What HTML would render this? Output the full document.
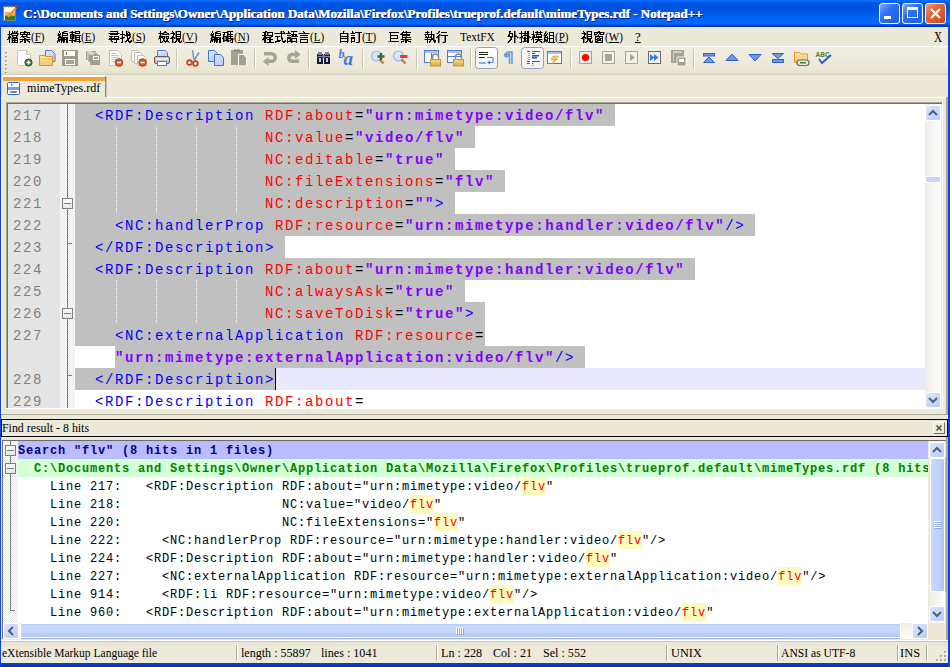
<!DOCTYPE html><html><head><meta charset="utf-8"><style>
*{margin:0;padding:0;box-sizing:border-box}
html,body{width:950px;height:667px;overflow:hidden;background:#0A4ADF}
body{position:relative;font-family:"Liberation Sans",sans-serif}
.a{position:absolute}
.serif{font-family:"Liberation Serif",serif;white-space:pre;transform-origin:0 0}
.ed{font-family:"Liberation Mono",monospace;white-space:pre;font-size:14px;letter-spacing:1.6px;line-height:22px;height:22px}
.rs{font-family:"Liberation Mono",monospace;white-space:pre;font-size:12px;letter-spacing:0.8px;line-height:18px;height:18px}
.t{color:#0000FF}.n{color:#FF0000}.q{color:#8000FF;font-weight:bold}.k{color:#000}
</style></head><body><svg width="0" height="0" style="position:absolute"><defs><pattern id="ck" width="2" height="2" patternUnits="userSpaceOnUse"><rect width="2" height="2" fill="#fff"/><rect width="1" height="1" fill="#E8E8E8"/><rect x="1" y="1" width="1" height="1" fill="#E8E8E8"/></pattern><pattern id="ig" width="1" height="2" patternUnits="userSpaceOnUse"><rect width="1" height="1" fill="#fff"/></pattern></defs></svg><div class="a" style="left:0px;top:0px;width:950px;height:27px;background:linear-gradient(#0A6AFE 0px,#0866FC 2px,#0052DE 3px,#0052E0 6px,#0054E4 10px,#0058EA 14px,#0064F8 17px,#0068FF 21px,#0066FC 24px,#0048D4 25px,#0034BC 26.5px,#0030B0 27px);"></div><div class="a serif" style="left:23px;top:6px;font-weight:bold;font-size:13px;color:#fff;line-height:16px;text-shadow:0.5px 0 0 #fff,1px 1px 0 #0A2070,1.5px 1px 0 #0A2070">C:\Documents and Settings\Owner\Application Data\Mozilla\Firefox\Profiles\trueprof.default\mimeTypes.rdf - Notepad++</div><svg class="a" style="left:3px;top:4px" width="15" height="18" viewBox="0 0 15 18">
<rect x="0.5" y="2.5" width="12" height="14" fill="#fff" stroke="#8A7E68"/>
<rect x="2" y="8" width="10" height="3" fill="#EDB457"/>
<rect x="2" y="11" width="10" height="1" fill="#B8A060"/>
<rect x="2" y="12" width="10" height="4" fill="#2A7E2A"/>
<path d="M2.5 1.5v2M5.5 1.5v2M8.5 1.5v2" stroke="#4A7AD0"/>
<path d="M5 13 L13 4" stroke="#F08A30" stroke-width="2.2"/>
<rect x="12" y="1" width="2.5" height="2.5" fill="#E02A20"/>
</svg><div class="a" style="left:879px;top:3px;width:21px;height:21px;border:1px solid #fff;border-radius:3px;background:linear-gradient(135deg,#7EAAF8 0%,#2F6FF0 40%,#1F5EE6 100%)"></div><div class="a" style="left:884px;top:16px;width:7px;height:3px;background:#fff"></div><div class="a" style="left:902px;top:3px;width:21px;height:21px;border:1px solid #fff;border-radius:3px;background:linear-gradient(135deg,#7EAAF8 0%,#2F6FF0 40%,#1F5EE6 100%)"></div><div class="a" style="left:907px;top:7px;width:11px;height:11px;border:1px solid #fff;border-top-width:3px"></div><div class="a" style="left:925px;top:3px;width:21px;height:21px;border:1px solid #fff;border-radius:3px;background:linear-gradient(135deg,#F29A78 0%,#E4683E 35%,#D0471C 100%)"></div><svg class="a" style="left:925px;top:3px" width="21" height="21"><path d="M6 6L15 15M15 6L6 15" stroke="#fff" stroke-width="2.2"/></svg><div class="a" style="left:1px;top:27px;width:947px;height:636px;background:#ECE9D8;"></div><svg class="a" style="left:7px;top:31px" width="14" height="14" shape-rendering="crispEdges"><path d="M2 0h1v1h-1zM5 0h1v1h-1zM7 0h1v1h-1zM10 0h1v1h-1zM2 1h1v1h-1zM5 1h1v1h-1zM7 1h1v1h-1zM9 1h1v1h-1zM2 2h1v1h-1zM4 2h7v1h-7zM1 3h4v1h-4zM10 3h1v1h-1zM2 4h1v1h-1zM5 4h6v1h-6zM2 5h2v1h-2zM5 5h1v1h-1zM9 5h1v1h-1zM1 6h3v1h-3zM6 6h4v1h-4zM1 7h2v1h-2zM5 7h6v1h-6zM0 8h1v1h-1zM2 8h1v1h-1zM5 8h1v1h-1zM7 8h1v1h-1zM10 8h1v1h-1zM2 9h1v1h-1zM5 9h6v1h-6zM2 10h1v1h-1zM5 10h1v1h-1zM7 10h1v1h-1zM10 10h1v1h-1zM2 11h1v1h-1zM5 11h6v1h-6z" fill="#000"/><path d="M8 0h1v1h-1zM9 0h1v1h-1zM6 1h1v1h-1zM8 1h1v1h-1zM10 1h1v1h-1zM11 2h1v1h-1zM0 3h1v1h-1zM5 3h1v1h-1zM11 3h1v1h-1zM4 4h1v1h-1zM1 5h1v1h-1zM6 5h1v1h-1zM10 5h1v1h-1zM4 6h1v1h-1zM5 6h1v1h-1zM10 6h1v1h-1zM4 7h1v1h-1zM1 8h1v1h-1zM4 8h1v1h-1zM8 8h1v1h-1zM4 9h1v1h-1zM4 10h1v1h-1zM8 10h1v1h-1zM4 11h1v1h-1z" fill="#000" fill-opacity=".45"/></svg><svg class="a" style="left:19px;top:31px" width="14" height="14" shape-rendering="crispEdges"><path d="M5 0h2v1h-2zM1 1h10v1h-10zM1 2h1v1h-1zM5 2h1v1h-1zM8 2h1v1h-1zM10 2h1v1h-1zM1 3h10v1h-10zM3 4h1v1h-1zM7 4h1v1h-1zM2 5h6v1h-6zM4 6h1v1h-1zM8 6h3v1h-3zM5 7h2v1h-2zM1 8h10v1h-10zM3 9h1v1h-1zM5 9h2v1h-2zM8 9h1v1h-1zM1 10h2v1h-2zM5 10h2v1h-2zM9 10h2v1h-2zM1 11h1v1h-1zM5 11h2v1h-2zM10 11h1v1h-1z" fill="#000"/><path d="M4 2h1v1h-1zM11 3h1v1h-1zM8 4h1v1h-1zM8 5h1v1h-1zM1 6h1v1h-1zM3 6h1v1h-1zM5 6h1v1h-1zM7 6h1v1h-1zM0 8h1v1h-1zM11 8h1v1h-1zM7 9h1v1h-1zM9 9h1v1h-1zM3 10h1v1h-1zM8 10h1v1h-1z" fill="#000" fill-opacity=".45"/></svg><div class="a serif" style="left:31px;top:30px;font-size:13px;line-height:14px;color:#000;transform:scaleX(0.85)">(<u>F</u>)</div><svg class="a" style="left:57px;top:31px" width="14" height="14" shape-rendering="crispEdges"><path d="M2 0h1v1h-1zM7 0h3v1h-3zM2 1h1v1h-1zM5 1h2v1h-2zM1 2h1v1h-1zM3 2h1v1h-1zM5 2h6v1h-6zM1 3h3v1h-3zM5 3h1v1h-1zM10 3h1v1h-1zM1 4h2v1h-2zM5 4h6v1h-6zM2 5h2v1h-2zM5 5h1v1h-1zM1 6h10v1h-10zM1 7h1v1h-1zM4 7h4v1h-4zM9 7h2v1h-2zM1 8h10v1h-10zM1 9h2v1h-2zM4 9h4v1h-4zM9 9h2v1h-2zM0 10h1v1h-1zM2 10h1v1h-1zM4 10h1v1h-1zM6 10h2v1h-2zM9 10h2v1h-2zM0 11h1v1h-1zM4 11h1v1h-1zM6 11h1v1h-1zM9 11h2v1h-2z" fill="#000"/><path d="M6 0h1v1h-1zM10 0h1v1h-1zM7 1h1v1h-1zM0 3h1v1h-1zM0 4h1v1h-1zM3 4h1v1h-1zM1 5h1v1h-1zM4 5h1v1h-1zM0 7h1v1h-1zM2 7h1v1h-1zM3 7h1v1h-1zM0 9h1v1h-1zM3 9h1v1h-1zM1 10h1v1h-1zM5 10h1v1h-1zM7 11h1v1h-1z" fill="#000" fill-opacity=".45"/></svg><svg class="a" style="left:69px;top:31px" width="14" height="14" shape-rendering="crispEdges"><path d="M3 0h1v1h-1zM6 0h5v1h-5zM1 1h6v1h-6zM10 1h1v1h-1zM3 2h1v1h-1zM6 2h5v1h-5zM1 3h4v1h-4zM1 4h1v1h-1zM3 4h9v1h-9zM1 5h4v1h-4zM6 5h1v1h-1zM10 5h1v1h-1zM1 6h1v1h-1zM3 6h2v1h-2zM6 6h5v1h-5zM1 7h4v1h-4zM6 7h1v1h-1zM10 7h1v1h-1zM3 8h1v1h-1zM6 8h5v1h-5zM0 9h7v1h-7zM10 9h1v1h-1zM3 10h1v1h-1zM5 10h7v1h-7zM3 11h1v1h-1zM10 11h1v1h-1z" fill="#000"/><path d="M2 0h1v1h-1zM0 1h1v1h-1zM2 2h1v1h-1zM5 3h1v1h-1zM2 4h1v1h-1zM5 5h1v1h-1zM7 5h1v1h-1zM2 6h1v1h-1zM5 6h1v1h-1zM5 7h1v1h-1zM7 7h1v1h-1zM2 8h1v1h-1zM7 9h1v1h-1zM2 10h1v1h-1zM2 11h1v1h-1z" fill="#000" fill-opacity=".45"/></svg><div class="a serif" style="left:81px;top:30px;font-size:13px;line-height:14px;color:#000;transform:scaleX(0.85)">(<u>E</u>)</div><svg class="a" style="left:108px;top:31px" width="14" height="14" shape-rendering="crispEdges"><path d="M2 0h8v1h-8zM9 1h1v1h-1zM1 2h10v1h-10zM2 3h8v1h-8zM1 5h4v1h-4zM6 5h5v1h-5zM3 6h1v1h-1zM6 6h1v1h-1zM10 6h1v1h-1zM1 7h10v1h-10zM1 8h10v1h-10zM3 9h1v1h-1zM8 9h1v1h-1zM3 10h2v1h-2zM8 10h1v1h-1zM6 11h3v1h-3z" fill="#000"/><path d="M0 2h1v1h-1zM11 2h1v1h-1zM5 5h1v1h-1zM2 6h1v1h-1zM0 8h1v1h-1zM11 8h1v1h-1zM2 9h1v1h-1zM4 11h1v1h-1z" fill="#000" fill-opacity=".45"/></svg><svg class="a" style="left:120px;top:31px" width="14" height="14" shape-rendering="crispEdges"><path d="M2 0h1v1h-1zM6 0h1v1h-1zM2 1h1v1h-1zM6 1h1v1h-1zM8 1h2v1h-2zM2 2h1v1h-1zM6 2h2v1h-2zM9 2h1v1h-1zM0 3h5v1h-5zM6 3h5v1h-5zM2 4h1v1h-1zM5 4h5v1h-5zM2 5h1v1h-1zM7 5h1v1h-1zM10 5h1v1h-1zM2 6h3v1h-3zM7 6h1v1h-1zM9 6h1v1h-1zM0 7h3v1h-3zM7 7h3v1h-3zM2 8h1v1h-1zM7 8h2v1h-2zM2 9h1v1h-1zM6 9h3v1h-3zM11 9h1v1h-1zM2 10h1v1h-1zM5 10h2v1h-2zM8 10h4v1h-4zM1 11h2v1h-2zM9 11h2v1h-2z" fill="#000"/><path d="M7 0h1v1h-1zM8 0h1v1h-1zM7 1h1v1h-1zM10 2h1v1h-1zM4 4h1v1h-1zM10 4h1v1h-1zM6 5h1v1h-1zM9 5h1v1h-1zM1 6h1v1h-1zM10 6h1v1h-1zM3 7h1v1h-1zM10 9h1v1h-1zM4 10h1v1h-1zM5 11h1v1h-1z" fill="#000" fill-opacity=".45"/></svg><div class="a serif" style="left:132px;top:30px;font-size:13px;line-height:14px;color:#000;transform:scaleX(0.85)">(<u>S</u>)</div><svg class="a" style="left:158px;top:31px" width="14" height="14" shape-rendering="crispEdges"><path d="M2 0h1v1h-1zM7 0h1v1h-1zM2 1h1v1h-1zM6 1h3v1h-3zM1 2h5v1h-5zM9 2h2v1h-2zM2 3h1v1h-1zM4 3h5v1h-5zM10 3h1v1h-1zM2 4h1v1h-1zM1 5h6v1h-6zM8 5h3v1h-3zM1 6h4v1h-4zM6 6h1v1h-1zM8 6h1v1h-1zM10 6h1v1h-1zM1 7h2v1h-2zM5 7h2v1h-2zM8 7h3v1h-3zM2 8h1v1h-1zM5 8h1v1h-1zM9 8h1v1h-1zM2 9h1v1h-1zM5 9h2v1h-2zM8 9h2v1h-2zM2 10h1v1h-1zM4 10h1v1h-1zM6 10h5v1h-5zM2 11h2v1h-2zM7 11h1v1h-1z" fill="#000"/><path d="M6 0h1v1h-1zM5 1h1v1h-1zM0 2h1v1h-1zM6 2h1v1h-1zM8 2h1v1h-1zM9 3h1v1h-1zM11 3h1v1h-1zM1 4h1v1h-1zM3 4h1v1h-1zM7 5h1v1h-1zM5 6h1v1h-1zM7 6h1v1h-1zM0 7h1v1h-1zM4 7h1v1h-1zM0 8h1v1h-1zM6 8h1v1h-1zM8 8h1v1h-1zM5 10h1v1h-1zM4 11h1v1h-1zM10 11h1v1h-1zM11 11h1v1h-1z" fill="#000" fill-opacity=".45"/></svg><svg class="a" style="left:170px;top:31px" width="14" height="14" shape-rendering="crispEdges"><path d="M2 0h1v1h-1zM6 0h5v1h-5zM3 1h1v1h-1zM6 1h1v1h-1zM10 1h1v1h-1zM1 2h4v1h-4zM6 2h1v1h-1zM10 2h1v1h-1zM3 3h2v1h-2zM6 3h5v1h-5zM3 4h1v1h-1zM6 4h1v1h-1zM10 4h1v1h-1zM2 5h2v1h-2zM6 5h5v1h-5zM1 6h4v1h-4zM6 6h1v1h-1zM10 6h1v1h-1zM0 7h3v1h-3zM4 7h1v1h-1zM6 7h5v1h-5zM2 8h1v1h-1zM6 8h4v1h-4zM2 9h1v1h-1zM6 9h1v1h-1zM8 9h2v1h-2zM2 10h1v1h-1zM5 10h2v1h-2zM8 10h2v1h-2zM11 10h1v1h-1zM2 11h1v1h-1zM4 11h2v1h-2zM9 11h2v1h-2z" fill="#000"/><path d="M5 0h1v1h-1zM2 1h1v1h-1zM5 1h1v1h-1zM0 2h1v1h-1zM5 2h1v1h-1zM5 3h1v1h-1zM5 4h1v1h-1zM5 5h1v1h-1zM5 6h1v1h-1zM3 7h1v1h-1zM5 7h1v1h-1zM3 8h1v1h-1zM3 9h1v1h-1zM7 9h1v1h-1zM11 9h1v1h-1zM3 10h1v1h-1zM10 10h1v1h-1zM3 11h1v1h-1zM11 11h1v1h-1z" fill="#000" fill-opacity=".45"/></svg><div class="a serif" style="left:182px;top:30px;font-size:13px;line-height:14px;color:#000;transform:scaleX(0.85)">(<u>V</u>)</div><svg class="a" style="left:210px;top:31px" width="14" height="14" shape-rendering="crispEdges"><path d="M2 0h1v1h-1zM7 0h3v1h-3zM2 1h1v1h-1zM5 1h2v1h-2zM1 2h1v1h-1zM3 2h1v1h-1zM5 2h6v1h-6zM1 3h3v1h-3zM5 3h1v1h-1zM10 3h1v1h-1zM1 4h2v1h-2zM5 4h6v1h-6zM2 5h2v1h-2zM5 5h1v1h-1zM1 6h10v1h-10zM1 7h1v1h-1zM4 7h4v1h-4zM9 7h2v1h-2zM1 8h10v1h-10zM1 9h2v1h-2zM4 9h4v1h-4zM9 9h2v1h-2zM0 10h1v1h-1zM2 10h1v1h-1zM4 10h1v1h-1zM6 10h2v1h-2zM9 10h2v1h-2zM0 11h1v1h-1zM4 11h1v1h-1zM6 11h1v1h-1zM9 11h2v1h-2z" fill="#000"/><path d="M6 0h1v1h-1zM10 0h1v1h-1zM7 1h1v1h-1zM0 3h1v1h-1zM0 4h1v1h-1zM3 4h1v1h-1zM1 5h1v1h-1zM4 5h1v1h-1zM0 7h1v1h-1zM2 7h1v1h-1zM3 7h1v1h-1zM0 9h1v1h-1zM3 9h1v1h-1zM1 10h1v1h-1zM5 10h1v1h-1zM7 11h1v1h-1z" fill="#000" fill-opacity=".45"/></svg><svg class="a" style="left:222px;top:31px" width="14" height="14" shape-rendering="crispEdges"><path d="M5 0h6v1h-6zM1 1h5v1h-5zM8 1h1v1h-1zM2 2h1v1h-1zM5 2h1v1h-1zM8 2h1v1h-1zM1 3h2v1h-2zM5 3h6v1h-6zM1 4h1v1h-1zM5 4h1v1h-1zM8 4h1v1h-1zM1 5h10v1h-10zM1 6h1v1h-1zM4 6h2v1h-2zM8 6h1v1h-1zM0 7h2v1h-2zM4 7h7v1h-7zM1 8h1v1h-1zM4 8h2v1h-2zM9 8h2v1h-2zM1 9h6v1h-6zM8 9h1v1h-1zM10 9h1v1h-1zM1 10h1v1h-1zM5 10h2v1h-2zM10 10h1v1h-1zM9 11h2v1h-2z" fill="#000"/><path d="M0 1h1v1h-1zM6 1h1v1h-1zM6 2h1v1h-1zM2 4h1v1h-1zM6 4h1v1h-1zM0 6h1v1h-1zM2 6h1v1h-1zM3 6h1v1h-1zM6 6h1v1h-1zM2 7h1v1h-1zM3 7h1v1h-1zM11 7h1v1h-1zM2 8h1v1h-1zM3 8h1v1h-1zM6 8h1v1h-1zM8 8h1v1h-1zM11 8h1v1h-1zM7 9h1v1h-1zM9 9h1v1h-1zM2 10h1v1h-1zM4 10h1v1h-1zM7 10h1v1h-1zM8 10h1v1h-1zM8 11h1v1h-1z" fill="#000" fill-opacity=".45"/></svg><div class="a serif" style="left:234px;top:30px;font-size:13px;line-height:14px;color:#000;transform:scaleX(0.85)">(<u>N</u>)</div><svg class="a" style="left:262px;top:31px" width="14" height="14" shape-rendering="crispEdges"><path d="M3 0h2v1h-2zM1 1h3v1h-3zM5 1h6v1h-6zM2 2h2v1h-2zM5 2h1v1h-1zM10 2h1v1h-1zM2 3h2v1h-2zM5 3h1v1h-1zM10 3h1v1h-1zM0 4h11v1h-11zM2 5h2v1h-2zM9 5h2v1h-2zM2 6h7v1h-7zM1 7h4v1h-4zM7 7h2v1h-2zM0 8h4v1h-4zM5 8h6v1h-6zM2 9h2v1h-2zM7 9h2v1h-2zM2 10h2v1h-2zM7 10h2v1h-2zM2 11h2v1h-2zM5 11h7v1h-7z" fill="#000"/><path d="M0 1h1v1h-1zM4 1h1v1h-1zM6 2h1v1h-1zM6 3h1v1h-1zM7 5h1v1h-1zM8 5h1v1h-1zM1 6h1v1h-1zM9 6h1v1h-1zM0 9h1v1h-1zM4 11h1v1h-1z" fill="#000" fill-opacity=".45"/></svg><svg class="a" style="left:274px;top:31px" width="14" height="14" shape-rendering="crispEdges"><path d="M7 0h1v1h-1zM9 0h1v1h-1zM7 1h1v1h-1zM10 1h1v1h-1zM1 2h10v1h-10zM7 3h1v1h-1zM7 4h1v1h-1zM1 5h5v1h-5zM7 5h1v1h-1zM3 6h1v1h-1zM7 6h1v1h-1zM3 7h1v1h-1zM7 7h2v1h-2zM3 8h1v1h-1zM8 8h1v1h-1zM3 9h4v1h-4zM8 9h1v1h-1zM11 9h1v1h-1zM1 10h5v1h-5zM8 10h4v1h-4zM1 11h1v1h-1zM9 11h2v1h-2z" fill="#000"/><path d="M6 0h1v1h-1zM8 0h1v1h-1zM6 1h1v1h-1zM9 1h1v1h-1zM0 2h1v1h-1zM11 2h1v1h-1zM6 5h1v1h-1zM8 6h1v1h-1zM7 8h1v1h-1zM10 9h1v1h-1zM2 11h1v1h-1z" fill="#000" fill-opacity=".45"/></svg><svg class="a" style="left:286px;top:31px" width="14" height="14" shape-rendering="crispEdges"><path d="M2 0h1v1h-1zM5 0h6v1h-6zM2 1h1v1h-1zM7 1h1v1h-1zM0 2h5v1h-5zM7 2h1v1h-1zM5 3h6v1h-6zM1 4h4v1h-4zM6 4h2v1h-2zM9 4h2v1h-2zM5 5h7v1h-7zM1 6h4v1h-4zM1 7h10v1h-10zM1 8h1v1h-1zM4 8h2v1h-2zM10 8h1v1h-1zM1 9h1v1h-1zM4 9h2v1h-2zM10 9h1v1h-1zM1 10h10v1h-10zM1 11h1v1h-1zM5 11h1v1h-1zM10 11h1v1h-1z" fill="#000"/><path d="M11 0h1v1h-1zM3 1h1v1h-1zM3 8h1v1h-1zM6 8h1v1h-1zM3 9h1v1h-1zM6 9h1v1h-1zM6 11h1v1h-1z" fill="#000" fill-opacity=".45"/></svg><svg class="a" style="left:298px;top:31px" width="14" height="14" shape-rendering="crispEdges"><path d="M5 0h1v1h-1zM6 1h1v1h-1zM1 2h10v1h-10zM2 4h8v1h-8zM2 6h8v1h-8zM2 8h8v1h-8zM2 9h1v1h-1zM9 9h1v1h-1zM2 10h1v1h-1zM9 10h1v1h-1zM2 11h8v1h-8z" fill="#000"/><path d="M5 1h1v1h-1zM0 2h1v1h-1zM11 2h1v1h-1z" fill="#000" fill-opacity=".45"/></svg><div class="a serif" style="left:310px;top:30px;font-size:13px;line-height:14px;color:#000;transform:scaleX(0.85)">(<u>L</u>)</div><svg class="a" style="left:338px;top:31px" width="14" height="14" shape-rendering="crispEdges"><path d="M5 0h1v1h-1zM5 1h1v1h-1zM2 2h8v1h-8zM2 3h1v1h-1zM9 3h1v1h-1zM2 4h1v1h-1zM9 4h1v1h-1zM2 5h8v1h-8zM2 6h1v1h-1zM9 6h1v1h-1zM2 7h8v1h-8zM2 8h1v1h-1zM9 8h1v1h-1zM2 9h1v1h-1zM9 9h1v1h-1zM2 10h8v1h-8zM2 11h1v1h-1zM9 11h1v1h-1z" fill="#000"/><path d="M6 0h1v1h-1zM10 2h1v1h-1zM10 3h1v1h-1zM10 4h1v1h-1zM10 5h1v1h-1zM10 6h1v1h-1zM10 7h1v1h-1zM10 8h1v1h-1zM10 9h1v1h-1zM10 10h1v1h-1z" fill="#000" fill-opacity=".45"/></svg><svg class="a" style="left:350px;top:31px" width="14" height="14" shape-rendering="crispEdges"><path d="M2 0h1v1h-1zM2 1h1v1h-1zM5 1h7v1h-7zM1 2h4v1h-4zM9 2h1v1h-1zM9 3h1v1h-1zM1 4h4v1h-4zM9 4h1v1h-1zM9 5h1v1h-1zM1 6h4v1h-4zM9 6h1v1h-1zM1 7h4v1h-4zM9 7h1v1h-1zM1 8h1v1h-1zM4 8h1v1h-1zM9 8h1v1h-1zM1 9h1v1h-1zM4 9h1v1h-1zM9 9h1v1h-1zM1 10h4v1h-4zM9 10h1v1h-1zM1 11h1v1h-1zM6 11h3v1h-3z" fill="#000"/><path d="M3 1h1v1h-1zM0 2h1v1h-1zM8 2h1v1h-1zM8 3h1v1h-1zM8 4h1v1h-1zM8 5h1v1h-1zM8 6h1v1h-1zM8 7h1v1h-1zM8 8h1v1h-1zM8 9h1v1h-1zM8 10h1v1h-1zM9 11h1v1h-1z" fill="#000" fill-opacity=".45"/></svg><div class="a serif" style="left:362px;top:30px;font-size:13px;line-height:14px;color:#000;transform:scaleX(0.85)">(<u>T</u>)</div><svg class="a" style="left:388px;top:31px" width="14" height="14" shape-rendering="crispEdges"><path d="M1 1h10v1h-10zM2 2h1v1h-1zM2 3h1v1h-1zM2 4h8v1h-8zM2 5h1v1h-1zM9 5h1v1h-1zM2 6h1v1h-1zM9 6h1v1h-1zM2 7h8v1h-8zM2 8h1v1h-1zM2 9h1v1h-1zM1 10h10v1h-10z" fill="#000"/><path d="M0 10h1v1h-1z" fill="#000" fill-opacity=".45"/></svg><svg class="a" style="left:400px;top:31px" width="14" height="14" shape-rendering="crispEdges"><path d="M3 0h1v1h-1zM6 0h1v1h-1zM2 1h9v1h-9zM1 2h2v1h-2zM6 2h1v1h-1zM0 3h10v1h-10zM2 4h8v1h-8zM2 5h1v1h-1zM6 5h1v1h-1zM2 6h9v1h-9zM2 7h1v1h-1zM5 7h1v1h-1zM1 8h10v1h-10zM5 9h3v1h-3zM1 10h3v1h-3zM5 10h2v1h-2zM8 10h3v1h-3zM1 11h1v1h-1zM5 11h2v1h-2z" fill="#000"/><path d="M5 0h1v1h-1zM6 7h1v1h-1zM0 8h1v1h-1zM11 8h1v1h-1zM3 9h1v1h-1zM4 9h1v1h-1zM8 9h1v1h-1zM10 11h1v1h-1z" fill="#000" fill-opacity=".45"/></svg><svg class="a" style="left:424px;top:31px" width="14" height="14" shape-rendering="crispEdges"><path d="M3 0h1v1h-1zM7 0h1v1h-1zM1 1h4v1h-4zM7 1h1v1h-1zM3 2h1v1h-1zM7 2h1v1h-1zM1 3h9v1h-9zM1 4h1v1h-1zM4 4h1v1h-1zM7 4h1v1h-1zM9 4h1v1h-1zM2 5h1v1h-1zM4 5h1v1h-1zM7 5h1v1h-1zM9 5h1v1h-1zM1 6h7v1h-7zM9 6h1v1h-1zM3 7h1v1h-1zM7 7h3v1h-3zM1 8h9v1h-9zM3 9h1v1h-1zM6 9h1v1h-1zM9 9h3v1h-3zM3 10h1v1h-1zM5 10h2v1h-2zM10 10h2v1h-2zM3 11h1v1h-1zM5 11h1v1h-1zM10 11h1v1h-1z" fill="#000"/><path d="M5 1h1v1h-1zM0 3h1v1h-1zM10 3h1v1h-1zM10 4h1v1h-1zM1 5h1v1h-1zM6 5h1v1h-1zM10 5h1v1h-1zM10 6h1v1h-1zM10 7h1v1h-1zM0 8h1v1h-1zM10 8h1v1h-1zM7 9h1v1h-1zM9 10h1v1h-1zM11 11h1v1h-1z" fill="#000" fill-opacity=".45"/></svg><svg class="a" style="left:436px;top:31px" width="14" height="14" shape-rendering="crispEdges"><path d="M3 0h1v1h-1zM2 1h1v1h-1zM5 1h6v1h-6zM1 2h1v1h-1zM3 3h1v1h-1zM2 4h2v1h-2zM5 4h7v1h-7zM1 5h2v1h-2zM9 5h1v1h-1zM0 6h3v1h-3zM9 6h1v1h-1zM2 7h1v1h-1zM9 7h1v1h-1zM2 8h1v1h-1zM9 8h1v1h-1zM2 9h1v1h-1zM9 9h1v1h-1zM2 10h1v1h-1zM9 10h1v1h-1zM2 11h1v1h-1zM7 11h2v1h-2z" fill="#000"/><path d="M2 0h1v1h-1zM3 1h1v1h-1zM0 2h1v1h-1zM2 2h1v1h-1zM4 3h1v1h-1zM4 4h1v1h-1zM3 5h1v1h-1zM8 5h1v1h-1zM3 6h1v1h-1zM8 6h1v1h-1zM3 7h1v1h-1zM8 7h1v1h-1zM3 8h1v1h-1zM8 8h1v1h-1zM3 9h1v1h-1zM8 9h1v1h-1zM3 10h1v1h-1zM8 10h1v1h-1zM3 11h1v1h-1zM6 11h1v1h-1zM9 11h1v1h-1z" fill="#000" fill-opacity=".45"/></svg><svg class="a" style="left:507px;top:31px" width="14" height="14" shape-rendering="crispEdges"><path d="M2 0h2v1h-2zM7 0h1v1h-1zM2 1h1v1h-1zM7 1h1v1h-1zM2 2h4v1h-4zM7 2h1v1h-1zM2 3h1v1h-1zM5 3h1v1h-1zM7 3h1v1h-1zM1 4h2v1h-2zM5 4h1v1h-1zM7 4h2v1h-2zM1 5h5v1h-5zM7 5h3v1h-3zM3 6h2v1h-2zM7 6h1v1h-1zM10 6h1v1h-1zM4 7h1v1h-1zM7 7h1v1h-1zM3 8h2v1h-2zM7 8h1v1h-1zM2 9h2v1h-2zM7 9h1v1h-1zM1 10h2v1h-2zM7 10h1v1h-1zM1 11h1v1h-1zM7 11h1v1h-1z" fill="#000"/><path d="M8 0h1v1h-1zM3 1h1v1h-1zM8 1h1v1h-1zM8 2h1v1h-1zM1 3h1v1h-1zM8 3h1v1h-1zM9 4h1v1h-1zM0 5h1v1h-1zM10 5h1v1h-1zM5 6h1v1h-1zM8 6h1v1h-1zM11 6h1v1h-1zM3 7h1v1h-1zM8 7h1v1h-1zM10 7h1v1h-1zM8 8h1v1h-1zM8 9h1v1h-1zM8 10h1v1h-1zM0 11h1v1h-1zM8 11h1v1h-1z" fill="#000" fill-opacity=".45"/></svg><svg class="a" style="left:519px;top:31px" width="14" height="14" shape-rendering="crispEdges"><path d="M2 0h1v1h-1zM6 0h1v1h-1zM8 0h2v1h-2zM2 1h1v1h-1zM6 1h1v1h-1zM8 1h2v1h-2zM0 2h10v1h-10zM2 3h1v1h-1zM6 3h1v1h-1zM8 3h2v1h-2zM2 4h1v1h-1zM4 4h6v1h-6zM2 5h2v1h-2zM8 5h3v1h-3zM1 6h3v1h-3zM5 6h2v1h-2zM8 6h2v1h-2zM11 6h1v1h-1zM2 7h1v1h-1zM4 7h6v1h-6zM2 8h1v1h-1zM5 8h2v1h-2zM8 8h2v1h-2zM2 9h1v1h-1zM5 9h2v1h-2zM8 9h2v1h-2zM2 10h1v1h-1zM4 10h6v1h-6zM1 11h2v1h-2zM8 11h2v1h-2z" fill="#000"/><path d="M5 0h1v1h-1zM5 1h1v1h-1zM5 3h1v1h-1zM5 5h1v1h-1zM6 5h1v1h-1zM0 6h1v1h-1zM10 6h1v1h-1zM0 7h1v1h-1zM1 7h1v1h-1zM7 9h1v1h-1zM3 10h1v1h-1zM0 11h1v1h-1zM4 11h1v1h-1z" fill="#000" fill-opacity=".45"/></svg><svg class="a" style="left:531px;top:31px" width="14" height="14" shape-rendering="crispEdges"><path d="M2 0h1v1h-1zM6 0h1v1h-1zM9 0h1v1h-1zM2 1h1v1h-1zM4 1h7v1h-7zM2 2h1v1h-1zM6 2h1v1h-1zM9 2h1v1h-1zM1 3h2v1h-2zM5 3h6v1h-6zM2 4h2v1h-2zM5 4h1v1h-1zM10 4h1v1h-1zM2 5h2v1h-2zM5 5h6v1h-6zM1 6h10v1h-10zM1 7h2v1h-2zM7 7h1v1h-1zM0 8h1v1h-1zM2 8h1v1h-1zM4 8h7v1h-7zM2 9h1v1h-1zM6 9h3v1h-3zM2 10h1v1h-1zM5 10h2v1h-2zM9 10h2v1h-2zM2 11h1v1h-1zM4 11h2v1h-2zM10 11h1v1h-1z" fill="#000"/><path d="M5 0h1v1h-1zM11 1h1v1h-1zM5 2h1v1h-1zM0 3h1v1h-1zM3 3h1v1h-1zM4 3h1v1h-1zM1 5h1v1h-1zM1 8h1v1h-1zM11 8h1v1h-1zM9 9h1v1h-1zM8 10h1v1h-1zM11 11h1v1h-1z" fill="#000" fill-opacity=".45"/></svg><svg class="a" style="left:543px;top:31px" width="14" height="14" shape-rendering="crispEdges"><path d="M2 1h1v1h-1zM6 1h5v1h-5zM2 2h1v1h-1zM4 2h1v1h-1zM6 2h1v1h-1zM10 2h1v1h-1zM1 3h1v1h-1zM3 3h1v1h-1zM6 3h1v1h-1zM10 3h1v1h-1zM1 4h3v1h-3zM6 4h5v1h-5zM2 5h1v1h-1zM4 5h1v1h-1zM6 5h1v1h-1zM10 5h1v1h-1zM1 6h4v1h-4zM6 6h1v1h-1zM10 6h1v1h-1zM1 7h1v1h-1zM4 7h1v1h-1zM6 7h5v1h-5zM1 8h2v1h-2zM4 8h1v1h-1zM6 8h1v1h-1zM10 8h1v1h-1zM1 9h4v1h-4zM6 9h1v1h-1zM10 9h1v1h-1zM1 10h1v1h-1zM3 10h2v1h-2zM6 10h1v1h-1zM10 10h1v1h-1zM5 11h7v1h-7z" fill="#000"/><path d="M2 0h1v1h-1zM3 0h1v1h-1zM3 1h1v1h-1zM1 2h1v1h-1zM2 3h1v1h-1zM4 3h1v1h-1zM0 4h1v1h-1zM1 5h1v1h-1zM2 7h1v1h-1zM5 7h1v1h-1zM3 8h1v1h-1zM0 10h1v1h-1zM2 10h1v1h-1zM0 11h1v1h-1zM1 11h1v1h-1zM3 11h1v1h-1z" fill="#000" fill-opacity=".45"/></svg><div class="a serif" style="left:555px;top:30px;font-size:13px;line-height:14px;color:#000;transform:scaleX(0.85)">(<u>P</u>)</div><svg class="a" style="left:581px;top:31px" width="14" height="14" shape-rendering="crispEdges"><path d="M2 0h1v1h-1zM6 0h5v1h-5zM3 1h1v1h-1zM6 1h1v1h-1zM10 1h1v1h-1zM1 2h4v1h-4zM6 2h1v1h-1zM10 2h1v1h-1zM3 3h2v1h-2zM6 3h5v1h-5zM3 4h1v1h-1zM6 4h1v1h-1zM10 4h1v1h-1zM2 5h2v1h-2zM6 5h5v1h-5zM1 6h4v1h-4zM6 6h1v1h-1zM10 6h1v1h-1zM0 7h3v1h-3zM4 7h1v1h-1zM6 7h5v1h-5zM2 8h1v1h-1zM6 8h4v1h-4zM2 9h1v1h-1zM6 9h1v1h-1zM8 9h2v1h-2zM2 10h1v1h-1zM5 10h2v1h-2zM8 10h2v1h-2zM11 10h1v1h-1zM2 11h1v1h-1zM4 11h2v1h-2zM9 11h2v1h-2z" fill="#000"/><path d="M5 0h1v1h-1zM2 1h1v1h-1zM5 1h1v1h-1zM0 2h1v1h-1zM5 2h1v1h-1zM5 3h1v1h-1zM5 4h1v1h-1zM5 5h1v1h-1zM5 6h1v1h-1zM3 7h1v1h-1zM5 7h1v1h-1zM3 8h1v1h-1zM3 9h1v1h-1zM7 9h1v1h-1zM11 9h1v1h-1zM3 10h1v1h-1zM10 10h1v1h-1zM3 11h1v1h-1zM11 11h1v1h-1z" fill="#000" fill-opacity=".45"/></svg><svg class="a" style="left:593px;top:31px" width="14" height="14" shape-rendering="crispEdges"><path d="M5 0h2v1h-2zM1 1h10v1h-10zM1 2h1v1h-1zM4 2h1v1h-1zM6 2h2v1h-2zM10 2h1v1h-1zM1 3h3v1h-3zM7 3h4v1h-4zM5 4h1v1h-1zM2 5h8v1h-8zM2 6h1v1h-1zM6 6h1v1h-1zM9 6h1v1h-1zM2 7h1v1h-1zM4 7h2v1h-2zM7 7h3v1h-3zM2 8h3v1h-3zM6 8h2v1h-2zM9 8h1v1h-1zM2 9h1v1h-1zM4 9h4v1h-4zM9 9h1v1h-1zM2 10h3v1h-3zM9 10h1v1h-1zM2 11h8v1h-8z" fill="#000"/><path d="M11 1h1v1h-1zM3 2h1v1h-1zM11 2h1v1h-1zM5 3h1v1h-1zM6 3h1v1h-1zM1 4h1v1h-1zM2 4h1v1h-1zM4 4h1v1h-1zM3 6h1v1h-1zM4 6h1v1h-1zM6 7h1v1h-1zM5 8h1v1h-1zM8 9h1v1h-1zM8 10h1v1h-1z" fill="#000" fill-opacity=".45"/></svg><div class="a serif" style="left:605px;top:30px;font-size:13px;line-height:14px;color:#000;transform:scaleX(0.85)">(<u>W</u>)</div><div class="a serif" style="left:460px;top:30px;font-size:13px;line-height:14px;color:#000;transform:scaleX(0.88)">TextFX</div><div class="a serif" style="left:635px;top:30px;font-size:13px;line-height:14px;color:#000"><u>?</u></div><div class="a serif" style="left:934px;top:30px;font-size:14px;line-height:15px;color:#000;transform:scaleX(0.8)">X</div><div class="a" style="left:1px;top:46px;width:947px;height:1px;background:#fff;"></div><div class="a" style="left:1px;top:47px;width:947px;height:27px;background:linear-gradient(#F0EEE2,#EEEBDC 50%,#E9E5D2 88%,#E0DCC8);"></div><div class="a" style="left:1px;top:74px;width:947px;height:1px;background:#D6D2BF;"></div><div class="a" style="left:3px;top:75px;width:102px;height:2px;background:#fff;"></div><div class="a" style="left:5px;top:52px;width:2px;height:2px;background:#A59E88;"></div><div class="a" style="left:6px;top:53px;width:1px;height:1px;background:#fff;"></div><div class="a" style="left:5px;top:56px;width:2px;height:2px;background:#A59E88;"></div><div class="a" style="left:6px;top:57px;width:1px;height:1px;background:#fff;"></div><div class="a" style="left:5px;top:60px;width:2px;height:2px;background:#A59E88;"></div><div class="a" style="left:6px;top:61px;width:1px;height:1px;background:#fff;"></div><div class="a" style="left:5px;top:64px;width:2px;height:2px;background:#A59E88;"></div><div class="a" style="left:6px;top:65px;width:1px;height:1px;background:#fff;"></div><div class="a" style="left:5px;top:68px;width:2px;height:2px;background:#A59E88;"></div><div class="a" style="left:6px;top:69px;width:1px;height:1px;background:#fff;"></div><div class="a" style="left:5px;top:72px;width:2px;height:2px;background:#A59E88;"></div><div class="a" style="left:6px;top:73px;width:1px;height:1px;background:#fff;"></div><div class="a" style="left:176px;top:49px;width:1px;height:20px;background:#C8C4B2;"></div><div class="a" style="left:177px;top:49px;width:1px;height:20px;background:#fff;"></div><div class="a" style="left:254px;top:49px;width:1px;height:20px;background:#C8C4B2;"></div><div class="a" style="left:255px;top:49px;width:1px;height:20px;background:#fff;"></div><div class="a" style="left:308px;top:49px;width:1px;height:20px;background:#C8C4B2;"></div><div class="a" style="left:309px;top:49px;width:1px;height:20px;background:#fff;"></div><div class="a" style="left:362px;top:49px;width:1px;height:20px;background:#C8C4B2;"></div><div class="a" style="left:363px;top:49px;width:1px;height:20px;background:#fff;"></div><div class="a" style="left:416px;top:49px;width:1px;height:20px;background:#C8C4B2;"></div><div class="a" style="left:417px;top:49px;width:1px;height:20px;background:#fff;"></div><div class="a" style="left:470px;top:49px;width:1px;height:20px;background:#C8C4B2;"></div><div class="a" style="left:471px;top:49px;width:1px;height:20px;background:#fff;"></div><div class="a" style="left:570px;top:49px;width:1px;height:20px;background:#C8C4B2;"></div><div class="a" style="left:571px;top:49px;width:1px;height:20px;background:#fff;"></div><div class="a" style="left:693px;top:49px;width:1px;height:20px;background:#C8C4B2;"></div><div class="a" style="left:694px;top:49px;width:1px;height:20px;background:#fff;"></div>
<svg class="a" style="left:0;top:0" width="950" height="80" viewBox="0 0 950 80">
<defs>
<linearGradient id="gblue" x1="0" y1="0" x2="0" y2="1"><stop offset="0" stop-color="#86A8EE"/><stop offset="1" stop-color="#4C7EE0"/></linearGradient>
<linearGradient id="gpage" x1="0" y1="0" x2="1" y2="1"><stop offset="0" stop-color="#DDE8FC"/><stop offset="1" stop-color="#B2CBF6"/></linearGradient>
<linearGradient id="gfold" x1="0" y1="0" x2="0" y2="1"><stop offset="0" stop-color="#FBE7B0"/><stop offset="1" stop-color="#F2C862"/></linearGradient>
<linearGradient id="glock" x1="0" y1="0" x2="0" y2="1"><stop offset="0" stop-color="#F6DC8C"/><stop offset="1" stop-color="#E0A840"/></linearGradient>
<linearGradient id="gbtn" x1="0" y1="0" x2="0" y2="1"><stop offset="0" stop-color="#FFFFFF"/><stop offset="1" stop-color="#F2F1EA"/></linearGradient>
</defs>
<!-- new -->
<path d="M17.5 50.5h9l4 4v11h-13z" fill="#fff" stroke="#C9C6B9"/>
<path d="M26.5 50.5v4h4" fill="#EDEBE2" stroke="#C9C6B9"/>
<circle cx="28.5" cy="62.5" r="3.6" fill="#3C7A3C" stroke="#285A28"/>
<path d="M28.5 60.5v4M26.5 62.5h4" stroke="#fff" stroke-width="1.4"/>
<!-- open -->
<path d="M45.5 50.5h6l3.5 3.5v7.5h-9.5z" fill="url(#gpage)" stroke="#4A7EDB"/>
<path d="M39.5 55.5h5l1 1h7v9h-13z" fill="url(#gfold)" stroke="#F08A22"/>
<path d="M40 59h12" stroke="#F3C060"/>
<!-- save -->
<rect x="62" y="50" width="16" height="16" fill="#9E9A88"/>
<rect x="64" y="51" width="11" height="5" fill="#fff"/>
<rect x="66" y="52" width="1" height="3" fill="#6E6A5C"/>
<rect x="65" y="59" width="10" height="6" fill="#fff"/>
<rect x="66" y="60" width="8" height="4" fill="#A8A494"/>
<!-- save all -->
<rect x="86" y="51" width="10" height="9" fill="#A6A292"/>
<rect x="88" y="53" width="10" height="9" fill="#9E9A88" stroke="#fff" stroke-width="0.6"/>
<rect x="90" y="55" width="10" height="10" fill="#A39F8E"/>
<rect x="87" y="51.5" width="5" height="1" fill="#fff"/>
<rect x="89" y="53.5" width="5" height="1" fill="#fff"/>
<rect x="93" y="56" width="6" height="4" fill="#fff"/>
<rect x="94" y="57" width="4" height="2" fill="#9E9A88"/>
<!-- close -->
<path d="M109.5 50.5h8l4 4v11h-12z" fill="#fff" stroke="#C2BFB2"/>
<path d="M111.5 53.5h5M111.5 55.5h7M111.5 57.5h7M111.5 59.5h6M111.5 61.5h4" stroke="#B4B1A3" stroke-width="0.8"/>
<circle cx="119" cy="62.5" r="3.8" fill="#E05A24" stroke="#B83A10"/>
<path d="M117 62.5h4" stroke="#fff" stroke-width="1.4"/>
<!-- close all -->
<path d="M131.5 50.5h6l2 2v9h-8z" fill="#fff" stroke="#C2BFB2"/>
<path d="M134.5 52.5h6l2 2v9h-8z" fill="#fff" stroke="#C2BFB2"/>
<path d="M137.5 55.5h6l3 3v7h-9z" fill="#fff" stroke="#C2BFB2"/>
<circle cx="142.5" cy="62.5" r="3.8" fill="#E05A24" stroke="#B83A10"/>
<path d="M140.5 62.5h4" stroke="#fff" stroke-width="1.4"/>
<!-- print -->
<path d="M157.5 50.5h8l2 2v5h-10z" fill="url(#gpage)" stroke="#4A7EDB"/>
<rect x="154.5" y="56.5" width="15" height="7" rx="1.5" fill="#C8C8C8" stroke="#606060"/>
<rect x="156" y="58" width="12" height="2" fill="#E8E8E8"/>
<rect x="157.5" y="61.5" width="9" height="4" fill="#fff" stroke="#4A7EDB"/>
<!-- cut -->
<path d="M192.5 50l1.5 10M199 52.5l-5 8" stroke="#7E96BE" stroke-width="1.6"/>
<circle cx="189.5" cy="62.5" r="2.4" fill="none" stroke="#D23C10" stroke-width="1.6"/>
<circle cx="195.5" cy="63.5" r="2.4" fill="none" stroke="#D23C10" stroke-width="1.6"/>
<!-- copy -->
<path d="M208.5 50.5h6l3 3v8h-9z" fill="url(#gpage)" stroke="#3C74D6"/>
<path d="M214.5 54.5h6l3 3v8h-9z" fill="url(#gpage)" stroke="#3C74D6"/>
<!-- paste (disabled) -->
<rect x="231" y="50" width="12" height="15" fill="#A5A192"/>
<rect x="234" y="49.5" width="6" height="2" fill="#8C8878"/>
<path d="M238.5 54.5h5l3 3v8.5h-8z" fill="#A5A192" stroke="#fff"/>
<!-- undo -->
<path d="M264 53.75H271.5A3.75 3.75 0 0 1 271.5 61.25H267" fill="none" stroke="#A9A594" stroke-width="3.6"/>
<path d="M262.8 61.5L268.5 57V66Z" fill="#A9A594"/>
<!-- redo -->
<path d="M299 61.25H291.5A3.5 3.5 0 0 1 291.5 54.5H295" fill="none" stroke="#A9A594" stroke-width="3.6"/>
<path d="M300.8 54.5L295 50V59Z" fill="#A9A594"/>
<!-- find -->
<rect x="317" y="54" width="6" height="10" fill="#141C30"/>
<rect x="324" y="54" width="6" height="10" fill="#141C30"/>
<rect x="318" y="52" width="4" height="3" fill="#7A7E98"/>
<rect x="325" y="52" width="4" height="3" fill="#7A7E98"/>
<rect x="322" y="55" width="3" height="3" fill="#5A6078"/>
<rect x="318" y="56" width="12" height="1" fill="#8088A0"/>
<rect x="319" y="58" width="2" height="4" fill="#C8CCE0"/>
<rect x="326" y="58" width="2" height="4" fill="#C8CCE0"/>
<rect x="317" y="57" width="1" height="1" fill="#3C8A3C"/>
<rect x="322" y="59" width="1" height="1" fill="#3C8A3C"/>
<rect x="329" y="57" width="1" height="1" fill="#3C8A3C"/>
<!-- replace -->
<text x="338.5" y="58" font-family="Liberation Serif" font-style="italic" font-weight="bold" font-size="12" fill="#3A78E8">b</text>
<text x="343.5" y="65" font-family="Liberation Serif" font-style="italic" font-weight="bold" font-size="19" fill="#3A78E8">a</text>
<path d="M344 56.5l3.5 3" stroke="#8A9A8A" stroke-width="1.4"/>
<!-- zoom in -->
<circle cx="376.5" cy="56" r="5" fill="#D8E4FA" stroke="#9EB8EE" stroke-width="1.2"/>
<path d="M379.5 59.5l4 4" stroke="#C87840" stroke-width="2.4"/>
<path d="M381 53v7M377.5 56.5h7" stroke="#3A6A3A" stroke-width="2.4"/>
<!-- zoom out -->
<circle cx="398.5" cy="56" r="5" fill="#D8E4FA" stroke="#9EB8EE" stroke-width="1.2"/>
<path d="M401.5 59.5l4 4" stroke="#C87840" stroke-width="2.4"/>
<rect x="400" y="55" width="7.5" height="3" fill="#E8402A"/>
<!-- sync v -->
<rect x="424.5" y="50.5" width="14" height="12" fill="#fff" stroke="#4A7EDB"/>
<rect x="425" y="51" width="13" height="2" fill="#A8C4F0"/>
<path d="M431.5 53v9" stroke="#4A7EDB"/>
<path d="M432.5 59v-2a3 3 0 0 1 6 0v2" fill="none" stroke="#8A8A8A" stroke-width="1.5"/>
<rect x="430.5" y="59.5" width="10" height="6.5" fill="url(#glock)" stroke="#D09038"/>
<!-- sync h -->
<rect x="447.5" y="50.5" width="14" height="12" fill="#fff" stroke="#4A7EDB"/>
<rect x="448" y="51" width="13" height="2" fill="#A8C4F0"/>
<path d="M448 56.5h13" stroke="#4A7EDB"/>
<path d="M455.5 59v-2a3 3 0 0 1 6 0v2" fill="none" stroke="#8A8A8A" stroke-width="1.5"/>
<rect x="453.5" y="59.5" width="10" height="6.5" fill="url(#glock)" stroke="#D09038"/>
<!-- word wrap pressed -->
<rect x="475.5" y="47.5" width="22" height="21" rx="3" fill="url(#gbtn)" stroke="#8DA2BF"/>
<path d="M479 52.5h9M479 54.5h9M479 57.5h6" stroke="#1A1A1A"/>
<path d="M484 52.5h1M484 57.5h1" stroke="#40A040"/>
<path d="M487 57.5h6v5h-4" fill="none" stroke="#4A7EDB"/>
<path d="M487 62.5l3-2v4z" fill="#4A7EDB"/>
<rect x="479" y="62" width="7" height="2" fill="#8EAEE8"/>
<!-- pilcrow -->
<path d="M506.5 52h5.5v12M509.5 52v12" fill="none" stroke="#6C9CE6" stroke-width="1.6"/>
<circle cx="506.5" cy="55" r="2.6" fill="#6C9CE6"/>
<!-- indent guide pressed -->
<rect x="521.5" y="47.5" width="22" height="21" rx="3" fill="url(#gbtn)" stroke="#8DA2BF"/>
<path d="M527 51.5h3M532 51.5h8M532 53.5h3M532 55.5h7M532 57.5h5M527 61.5h3M532 61.5h8M527 63.5h3M532 63.5h1" stroke="#2A5ED0"/>
<rect x="532" y="55" width="7" height="1.6" fill="#2A5ED0"/>
<rect x="532" y="57" width="5" height="1.6" fill="#2A5ED0"/>
<path d="M529 53v1M529 55v1M529 57v1M529 59v1" stroke="#E02020"/>
<path d="M533 65v1" stroke="#2A5ED0"/>
<!-- UDL -->
<rect x="547.5" y="51.5" width="14" height="12" fill="#fff" stroke="#4A7EDB"/>
<rect x="548" y="52" width="13" height="2" fill="#A8C4F0"/>
<path d="M553 56h6l-4 3h3l-6 5 2-4h-3z" fill="#F2C060" stroke="#E0A030" stroke-width="0.6"/>
<path d="M555 63.5h6" stroke="#6A6A6A"/>
<!-- record -->
<rect x="579.5" y="51.5" width="12" height="12" fill="#F2F0E8" stroke="#A9A596"/>
<circle cx="585.5" cy="57.5" r="3.6" fill="#F00"/>
<!-- stop -->
<rect x="602.5" y="51.5" width="12" height="12" fill="#F2F0E8" stroke="#A9A596"/>
<rect x="605" y="54" width="7" height="7" fill="#A9A596"/>
<!-- play -->
<rect x="625.5" y="51.5" width="12" height="12" fill="#F2F0E8" stroke="#A9A596"/>
<path d="M630 54l5 3.5-5 3.5z" fill="#A9A596"/>
<!-- play multi -->
<rect x="648.5" y="51.5" width="12" height="12" fill="#F2F0E8" stroke="#6E6C64"/>
<path d="M650 54l4.5 3.5-4.5 3.5zM654 54l4.5 3.5-4.5 3.5z" fill="#3C78E0"/>
<!-- save macro -->
<rect x="671" y="50" width="13" height="13" fill="#A6A292"/>
<rect x="677" y="57" width="9" height="9" fill="#A6A292" stroke="#fff" stroke-width="0.8"/>
<path d="M673 52h9M673 54h1M673 56h1M673 58h1M673 60h1" stroke="#fff"/>
<rect x="679" y="59" width="5" height="3" fill="#fff"/>
<!-- first -->
<rect x="703.5" y="53.5" width="11" height="2.5" fill="#6E98E8" stroke="#2C60D8"/>
<path d="M709 57L703.5 62.5h11z" fill="#6E98E8" stroke="#2C60D8"/>
<!-- up -->
<path d="M732 54L726 60.5h12z" fill="#6E98E8" stroke="#2C60D8"/>
<!-- down -->
<path d="M749 54.5h12L755 61z" fill="#6E98E8" stroke="#2C60D8"/>
<!-- last -->
<path d="M772 53.5h11.5L778 58.5z" fill="#6E98E8" stroke="#2C60D8"/>
<rect x="772.5" y="59.5" width="11" height="3" fill="#6E98E8" stroke="#2C60D8"/>
<!-- folder link -->
<path d="M794.5 52.5h5l1 1.5h7v8.5h-13z" fill="url(#gfold)" stroke="#F0962E"/>
<rect x="797" y="60" width="12" height="5.5" rx="2.7" fill="#E8E8E0" stroke="#6A6A6A" stroke-width="1.2"/>
<path d="M800 62.8h6" stroke="#2A7A2A" stroke-width="1.4"/>
<!-- spell -->
<text x="815.5" y="57" font-family="Liberation Sans" font-weight="bold" font-size="6.5" fill="#4A7A4A">ABC</text>
<path d="M819 59l3 4 9-8" fill="none" stroke="#2C60D8" stroke-width="2"/>
</svg>
<div class="a" style="left:3px;top:77px;width:102px;height:4px;background:#F9A23A;"></div><div class="a" style="left:105px;top:76px;width:1px;height:21px;background:#8C8979;"></div><div class="a" style="left:106px;top:77px;width:1px;height:20px;background:#C5C1B0;"></div><div class="a" style="left:106px;top:97px;width:840px;height:1px;background:#fff;"></div><div class="a" style="left:1px;top:97px;width:2px;height:1px;background:#fff;"></div><div class="a" style="left:1px;top:97px;width:1px;height:317px;background:#fff;"></div><div class="a" style="left:3px;top:81px;width:102px;height:16px;background:#ECE9D8;"></div><svg class="a" style="left:7px;top:82px" width="14" height="13"><rect x="0.5" y="0.5" width="12" height="12" rx="1" fill="#fff" stroke="#2A68DE"/><rect x="1" y="5" width="11" height="3" fill="#7AA2E6"/><rect x="3" y="9" width="7" height="2" rx="1" fill="#85857A"/><rect x="4" y="1.5" width="1.4" height="2.5" rx="0.7" fill="#3A78DA"/></svg><div class="a serif" style="left:27px;top:81px;font-size:13px;line-height:14px;color:#000;transform:scaleX(0.93)">mimeTypes.rdf</div><div class="a" style="left:946px;top:97px;width:2px;height:318px;background:#ACA899;"></div><div class="a" style="left:1px;top:414px;width:946px;height:1px;background:#ACA899;"></div><div class="a" style="left:6px;top:102px;width:937px;height:1px;background:#ACA899;"></div><div class="a" style="left:6px;top:102px;width:1px;height:307px;background:#ACA899;"></div><div class="a" style="left:7px;top:103px;width:935px;height:1px;background:#716F64;"></div><div class="a" style="left:7px;top:103px;width:1px;height:305px;background:#716F64;"></div><div class="a" style="left:942px;top:102px;width:1px;height:307px;background:#fff;"></div><div class="a" style="left:6px;top:408px;width:937px;height:1px;background:#fff;"></div><div class="a" style="left:8px;top:104px;width:917px;height:304px;background:#fff;overflow:hidden"><div class="a" style="left:0px;top:0px;width:52px;height:304px;background:#E4E4E4;"></div><svg class="a" style="left:52px;top:0" width="15" height="304"><rect width="15" height="304" fill="url(#ck)"/></svg><div class="a" style="left:59px;top:0px;width:1px;height:304px;background:#808080;"></div><div class="a" style="left:54px;top:94px;width:11px;height:11px;border:1px solid #808080;background:linear-gradient(#F8F8F8,#E8E8E8)"></div><div class="a" style="left:56px;top:99px;width:7px;height:1px;background:#808080"></div><div class="a" style="left:54px;top:204px;width:11px;height:11px;border:1px solid #808080;background:linear-gradient(#F8F8F8,#E8E8E8)"></div><div class="a" style="left:56px;top:209px;width:7px;height:1px;background:#808080"></div><div class="a" style="left:60px;top:139px;width:4px;height:1px;background:#808080;"></div><div class="a" style="left:60px;top:271px;width:4px;height:1px;background:#808080;"></div><div class="a" style="left:67px;top:0px;width:540px;height:22px;background:#C0C0C0;"></div><div class="a" style="left:67px;top:22px;width:400px;height:22px;background:#C0C0C0;"></div><div class="a" style="left:67px;top:44px;width:380px;height:22px;background:#C0C0C0;"></div><div class="a" style="left:67px;top:66px;width:430px;height:22px;background:#C0C0C0;"></div><div class="a" style="left:67px;top:88px;width:380px;height:22px;background:#C0C0C0;"></div><div class="a" style="left:67px;top:110px;width:680px;height:22px;background:#C0C0C0;"></div><div class="a" style="left:67px;top:132px;width:210px;height:22px;background:#C0C0C0;"></div><div class="a" style="left:67px;top:154px;width:620px;height:22px;background:#C0C0C0;"></div><div class="a" style="left:67px;top:176px;width:390px;height:22px;background:#C0C0C0;"></div><div class="a" style="left:67px;top:198px;width:410px;height:22px;background:#C0C0C0;"></div><div class="a" style="left:67px;top:220px;width:410px;height:22px;background:#C0C0C0;"></div><div class="a" style="left:107px;top:242px;width:470px;height:22px;background:#C0C0C0;"></div><div class="a" style="left:67px;top:264px;width:850px;height:22px;background:#E8E8FF;"></div><div class="a" style="left:67px;top:264px;width:200px;height:22px;background:#C0C0C0;"></div><svg class="a" style="left:108px;top:22px" width="1" height="88"><rect width="1" height="88" fill="url(#ig)"/></svg><svg class="a" style="left:108px;top:176px" width="1" height="44"><rect width="1" height="44" fill="url(#ig)"/></svg><svg class="a" style="left:148px;top:22px" width="1" height="88"><rect width="1" height="88" fill="url(#ig)"/></svg><svg class="a" style="left:148px;top:176px" width="1" height="44"><rect width="1" height="44" fill="url(#ig)"/></svg><svg class="a" style="left:188px;top:22px" width="1" height="88"><rect width="1" height="88" fill="url(#ig)"/></svg><svg class="a" style="left:188px;top:176px" width="1" height="44"><rect width="1" height="44" fill="url(#ig)"/></svg><svg class="a" style="left:228px;top:22px" width="1" height="88"><rect width="1" height="88" fill="url(#ig)"/></svg><svg class="a" style="left:228px;top:176px" width="1" height="44"><rect width="1" height="44" fill="url(#ig)"/></svg><div class="a ed" style="left:5px;top:1px;color:#808080">217</div><div class="a ed" style="left:67px;top:1px">  <span class="t">&lt;RDF:Description</span><span class="k"> </span><span class="n">RDF:about</span><span class="k">=</span><span class="q">&quot;urn:mimetype:video/flv&quot;</span></div><div class="a ed" style="left:5px;top:23px;color:#808080">218</div><div class="a ed" style="left:67px;top:23px">                   <span class="n">NC:value</span><span class="k">=</span><span class="q">&quot;video/flv&quot;</span></div><div class="a ed" style="left:5px;top:45px;color:#808080">219</div><div class="a ed" style="left:67px;top:45px">                   <span class="n">NC:editable</span><span class="k">=</span><span class="q">&quot;true&quot;</span></div><div class="a ed" style="left:5px;top:67px;color:#808080">220</div><div class="a ed" style="left:67px;top:67px">                   <span class="n">NC:fileExtensions</span><span class="k">=</span><span class="q">&quot;flv&quot;</span></div><div class="a ed" style="left:5px;top:89px;color:#808080">221</div><div class="a ed" style="left:67px;top:89px">                   <span class="n">NC:description</span><span class="k">=</span><span class="q">&quot;&quot;</span><span class="t">&gt;</span></div><div class="a ed" style="left:5px;top:111px;color:#808080">222</div><div class="a ed" style="left:67px;top:111px">    <span class="t">&lt;NC:handlerProp</span><span class="k"> </span><span class="n">RDF:resource</span><span class="k">=</span><span class="q">&quot;urn:mimetype:handler:video/flv&quot;</span><span class="t">/&gt;</span></div><div class="a ed" style="left:5px;top:133px;color:#808080">223</div><div class="a ed" style="left:67px;top:133px">  <span class="t">&lt;/RDF:Description&gt;</span></div><div class="a ed" style="left:5px;top:155px;color:#808080">224</div><div class="a ed" style="left:67px;top:155px">  <span class="t">&lt;RDF:Description</span><span class="k"> </span><span class="n">RDF:about</span><span class="k">=</span><span class="q">&quot;urn:mimetype:handler:video/flv&quot;</span></div><div class="a ed" style="left:5px;top:177px;color:#808080">225</div><div class="a ed" style="left:67px;top:177px">                   <span class="n">NC:alwaysAsk</span><span class="k">=</span><span class="q">&quot;true&quot;</span></div><div class="a ed" style="left:5px;top:199px;color:#808080">226</div><div class="a ed" style="left:67px;top:199px">                   <span class="n">NC:saveToDisk</span><span class="k">=</span><span class="q">&quot;true&quot;</span><span class="t">&gt;</span></div><div class="a ed" style="left:5px;top:221px;color:#808080">227</div><div class="a ed" style="left:67px;top:221px">    <span class="t">&lt;NC:externalApplication</span><span class="k"> </span><span class="n">RDF:resource</span><span class="k">=</span></div><div class="a ed" style="left:67px;top:243px">    <span class="q">&quot;urn:mimetype:externalApplication:video/flv&quot;</span><span class="t">/&gt;</span></div><div class="a ed" style="left:5px;top:265px;color:#808080">228</div><div class="a ed" style="left:67px;top:265px">  <span class="t">&lt;/RDF:Description&gt;</span></div><div class="a ed" style="left:5px;top:287px;color:#808080">229</div><div class="a ed" style="left:67px;top:287px">  <span class="t">&lt;RDF:Description</span><span class="k"> </span><span class="n">RDF:about</span><span class="k">=</span></div><div class="a" style="left:267px;top:264px;width:1px;height:22px;background:#000;"></div></div><div class="a" style="left:925px;top:104px;width:16px;height:304px;background:linear-gradient(90deg,#EEEDE5,#FDFDFB);"></div><div class="a" style="left:925px;top:105px;width:16px;height:16px;border:1px solid #fff;border-radius:2px;background:linear-gradient(135deg,#DCE6FD,#B9CCF8)"></div><svg class="a" style="left:0;top:0;overflow:visible" width="1" height="1"><path d="M929.0 115.0L933.0 111.0L937.0 115.0" stroke="#4D6185" stroke-width="2" fill="none"/></svg><div class="a" style="left:925px;top:392px;width:16px;height:16px;border:1px solid #fff;border-radius:2px;background:linear-gradient(135deg,#DCE6FD,#B9CCF8)"></div><svg class="a" style="left:0;top:0;overflow:visible" width="1" height="1"><path d="M929.0 398.0L933.0 402.0L937.0 398.0" stroke="#4D6185" stroke-width="2" fill="none"/></svg><div class="a" style="left:925px;top:176px;width:16px;height:7px;border:1px solid #fff;border-radius:2px;background:#C4D6FC"></div><div class="a" style="left:1px;top:419px;width:947px;height:18px;border:1px solid #000;background:#ECE9D8"></div><div class="a serif" style="left:2px;top:421px;font-size:13px;line-height:14px;color:#000;transform:scaleX(0.913)">Find result - 8 hits</div><div class="a" style="left:933px;top:422px;width:12px;height:12px;border:1px solid;border-color:#fff #716F64 #716F64 #fff;background:#ECE9D8"></div><svg class="a" style="left:933px;top:422px" width="12" height="12"><path d="M3.5 3.5L8.5 8.5M8.5 3.5L3.5 8.5" stroke="#4D4D4D" stroke-width="1.5"/></svg><div class="a" style="left:946px;top:437px;width:2px;height:203px;background:#ACA899;"></div><div class="a" style="left:2px;top:440px;width:944px;height:1px;background:#716F64;"></div><div class="a" style="left:2px;top:440px;width:1px;height:199px;background:#716F64;"></div><div class="a" style="left:3px;top:441px;width:925px;height:182px;background:#fff;overflow:hidden"><svg class="a" style="left:0;top:0" width="15" height="182"><rect width="15" height="182" fill="url(#ck)"/></svg><div class="a" style="left:7px;top:0px;width:1px;height:170px;background:#808080;"></div><div class="a" style="left:7px;top:169px;width:5px;height:1px;background:#808080;"></div><div class="a" style="left:2px;top:4px;width:11px;height:11px;border:1px solid #808080;background:linear-gradient(#F8F8F8,#E8E8E8)"></div><div class="a" style="left:4px;top:9px;width:7px;height:1px;background:#808080"></div><div class="a" style="left:2px;top:22px;width:11px;height:11px;border:1px solid #808080;background:linear-gradient(#F8F8F8,#E8E8E8)"></div><div class="a" style="left:4px;top:27px;width:7px;height:1px;background:#808080"></div><div class="a" style="left:15px;top:0px;width:910px;height:18px;background:#BBBBFF;"></div><div class="a rs" style="left:15px;top:1px;color:#000080;font-weight:bold">Search &quot;flv&quot; (8 hits in 1 files)</div><div class="a" style="left:15px;top:18px;width:910px;height:18px;background:#D5FFD5;"></div><div class="a rs" style="left:15px;top:19px;color:#008000;font-weight:bold">  C:\Documents and Settings\Owner\Application Data\Mozilla\Firefox\Profiles\trueprof.default\mimeTypes.rdf (8 hits)</div><div class="a" style="left:519px;top:36px;width:24px;height:18px;background:#FFFBBF;"></div><div class="a rs" style="left:15px;top:37px;color:#000">    Line 217:   &lt;RDF:Description RDF:about=&quot;urn:mimetype:video/<span style="color:#F00">flv</span>&quot;</div><div class="a" style="left:407px;top:54px;width:24px;height:18px;background:#FFFBBF;"></div><div class="a rs" style="left:15px;top:55px;color:#000">    Line 218:                    NC:value=&quot;video/<span style="color:#F00">flv</span>&quot;</div><div class="a" style="left:431px;top:72px;width:24px;height:18px;background:#FFFBBF;"></div><div class="a rs" style="left:15px;top:73px;color:#000">    Line 220:                    NC:fileExtensions=&quot;<span style="color:#F00">flv</span>&quot;</div><div class="a" style="left:615px;top:90px;width:24px;height:18px;background:#FFFBBF;"></div><div class="a rs" style="left:15px;top:91px;color:#000">    Line 222:     &lt;NC:handlerProp RDF:resource=&quot;urn:mimetype:handler:video/<span style="color:#F00">flv</span>&quot;/&gt;</div><div class="a" style="left:583px;top:108px;width:24px;height:18px;background:#FFFBBF;"></div><div class="a rs" style="left:15px;top:109px;color:#000">    Line 224:   &lt;RDF:Description RDF:about=&quot;urn:mimetype:handler:video/<span style="color:#F00">flv</span>&quot;</div><div class="a" style="left:775px;top:126px;width:24px;height:18px;background:#FFFBBF;"></div><div class="a rs" style="left:15px;top:127px;color:#000">    Line 227:     &lt;NC:externalApplication RDF:resource=&quot;urn:mimetype:externalApplication:video/<span style="color:#F00">flv</span>&quot;/&gt;</div><div class="a" style="left:487px;top:144px;width:24px;height:18px;background:#FFFBBF;"></div><div class="a rs" style="left:15px;top:145px;color:#000">    Line 914:     &lt;RDF:li RDF:resource=&quot;urn:mimetype:video/<span style="color:#F00">flv</span>&quot;/&gt;</div><div class="a" style="left:679px;top:162px;width:24px;height:18px;background:#FFFBBF;"></div><div class="a rs" style="left:15px;top:163px;color:#000">    Line 960:   &lt;RDF:Description RDF:about=&quot;urn:mimetype:externalApplication:video/<span style="color:#F00">flv</span>&quot;</div></div><div class="a" style="left:929px;top:441px;width:16px;height:182px;background:linear-gradient(90deg,#EEEDE5,#FDFDFB);"></div><div class="a" style="left:929px;top:442px;width:16px;height:16px;border:1px solid #fff;border-radius:2px;background:linear-gradient(135deg,#DCE6FD,#B9CCF8)"></div><svg class="a" style="left:0;top:0;overflow:visible" width="1" height="1"><path d="M933.0 452.0L937.0 448.0L941.0 452.0" stroke="#4D6185" stroke-width="2" fill="none"/></svg><div class="a" style="left:929px;top:606px;width:16px;height:16px;border:1px solid #fff;border-radius:2px;background:linear-gradient(135deg,#DCE6FD,#B9CCF8)"></div><svg class="a" style="left:0;top:0;overflow:visible" width="1" height="1"><path d="M933.0 612.0L937.0 616.0L941.0 612.0" stroke="#4D6185" stroke-width="2" fill="none"/></svg><div class="a" style="left:930px;top:458px;width:15px;height:134px;border:1px solid #fff;border-radius:2px;background:linear-gradient(90deg,#CBDAFC,#BCCEF8 70%,#AFC4F4)"></div><div class="a" style="left:945px;top:458px;width:1px;height:134px;background:#9FB3D8;"></div><div class="a" style="left:934px;top:521px;width:7px;height:1px;background:#fff;"></div><div class="a" style="left:935px;top:522px;width:7px;height:1px;background:#8CAEE8;"></div><div class="a" style="left:934px;top:523px;width:7px;height:1px;background:#fff;"></div><div class="a" style="left:935px;top:524px;width:7px;height:1px;background:#8CAEE8;"></div><div class="a" style="left:934px;top:525px;width:7px;height:1px;background:#fff;"></div><div class="a" style="left:935px;top:526px;width:7px;height:1px;background:#8CAEE8;"></div><div class="a" style="left:934px;top:527px;width:7px;height:1px;background:#fff;"></div><div class="a" style="left:935px;top:528px;width:7px;height:1px;background:#8CAEE8;"></div><div class="a" style="left:3px;top:623px;width:925px;height:16px;background:linear-gradient(#EEEDE5,#FDFDFB);"></div><div class="a" style="left:3px;top:623px;width:16px;height:16px;border:1px solid #fff;border-radius:2px;background:linear-gradient(135deg,#DCE6FD,#B9CCF8)"></div><svg class="a" style="left:0;top:0;overflow:visible" width="1" height="1"><path d="M13.0 627.0L9.0 631.0L13.0 635.0" stroke="#4D6185" stroke-width="2" fill="none"/></svg><div class="a" style="left:912px;top:623px;width:16px;height:16px;border:1px solid #fff;border-radius:2px;background:linear-gradient(135deg,#DCE6FD,#B9CCF8)"></div><svg class="a" style="left:0;top:0;overflow:visible" width="1" height="1"><path d="M918.0 627.0L922.0 631.0L918.0 635.0" stroke="#4D6185" stroke-width="2" fill="none"/></svg><div class="a" style="left:20px;top:623px;width:881px;height:15px;border:1px solid #fff;border-radius:2px;background:linear-gradient(#B4C8F4,#C8D8FC 15%,#C4D4FA 60%,#B2C6F2)"></div><div class="a" style="left:21px;top:638px;width:879px;height:1px;background:#9FB3D8;"></div><div class="a" style="left:456px;top:627px;width:1px;height:7px;background:#fff;"></div><div class="a" style="left:457px;top:628px;width:1px;height:7px;background:#8CAEE8;"></div><div class="a" style="left:458px;top:627px;width:1px;height:7px;background:#fff;"></div><div class="a" style="left:459px;top:628px;width:1px;height:7px;background:#8CAEE8;"></div><div class="a" style="left:460px;top:627px;width:1px;height:7px;background:#fff;"></div><div class="a" style="left:461px;top:628px;width:1px;height:7px;background:#8CAEE8;"></div><div class="a" style="left:462px;top:627px;width:1px;height:7px;background:#fff;"></div><div class="a" style="left:463px;top:628px;width:1px;height:7px;background:#8CAEE8;"></div><div class="a" style="left:928px;top:623px;width:18px;height:16px;background:#ECE9D8;"></div><div class="a" style="left:1px;top:640px;width:947px;height:1px;background:#fff;"></div><div class="a" style="left:1px;top:641px;width:947px;height:22px;background:linear-gradient(#E6E3D2,#ECE9D8 30%,#EDEADB);"></div><div class="a" style="left:1px;top:641px;width:947px;height:1px;background:#C9C5B2;"></div><div class="a" style="left:236px;top:645px;width:1px;height:16px;background:#ACA899;"></div><div class="a" style="left:237px;top:645px;width:1px;height:16px;background:#fff;"></div><div class="a" style="left:436px;top:645px;width:1px;height:16px;background:#ACA899;"></div><div class="a" style="left:437px;top:645px;width:1px;height:16px;background:#fff;"></div><div class="a" style="left:666px;top:645px;width:1px;height:16px;background:#ACA899;"></div><div class="a" style="left:667px;top:645px;width:1px;height:16px;background:#fff;"></div><div class="a" style="left:777px;top:645px;width:1px;height:16px;background:#ACA899;"></div><div class="a" style="left:778px;top:645px;width:1px;height:16px;background:#fff;"></div><div class="a" style="left:897px;top:645px;width:1px;height:16px;background:#ACA899;"></div><div class="a" style="left:898px;top:645px;width:1px;height:16px;background:#fff;"></div><div class="a" style="left:926px;top:645px;width:1px;height:16px;background:#ACA899;"></div><div class="a" style="left:927px;top:645px;width:1px;height:16px;background:#fff;"></div><div class="a serif" style="left:2px;top:646px;font-size:13px;line-height:14px;color:#000;transform:scaleX(0.886)">eXtensible Markup Language file</div><div class="a serif" style="left:241px;top:646px;font-size:13px;line-height:14px;color:#000;transform:scaleX(0.928)">length : 55897</div><div class="a serif" style="left:321px;top:646px;font-size:13px;line-height:14px;color:#000;transform:scaleX(0.932)">lines : 1041</div><div class="a serif" style="left:441px;top:646px;font-size:13px;line-height:14px;color:#000;transform:scaleX(0.933)">Ln : 228</div><div class="a serif" style="left:493px;top:646px;font-size:13px;line-height:14px;color:#000;transform:scaleX(0.931)">Col : 21</div><div class="a serif" style="left:543px;top:646px;font-size:13px;line-height:14px;color:#000;transform:scaleX(0.93)">Sel : 552</div><div class="a serif" style="left:671px;top:646px;font-size:13px;line-height:14px;color:#000;transform:scaleX(0.947)">UNIX</div><div class="a serif" style="left:781px;top:646px;font-size:13px;line-height:14px;color:#000;transform:scaleX(0.894)">ANSI as UTF-8</div><div class="a serif" style="left:900px;top:646px;font-size:13px;line-height:14px;color:#000;transform:scaleX(0.957)">INS</div><div class="a" style="left:945px;top:652px;width:2px;height:2px;background:#fff;"></div><div class="a" style="left:944px;top:651px;width:2px;height:2px;background:#B4A890;"></div><div class="a" style="left:941px;top:656px;width:2px;height:2px;background:#fff;"></div><div class="a" style="left:940px;top:655px;width:2px;height:2px;background:#B4A890;"></div><div class="a" style="left:945px;top:656px;width:2px;height:2px;background:#fff;"></div><div class="a" style="left:944px;top:655px;width:2px;height:2px;background:#B4A890;"></div><div class="a" style="left:937px;top:660px;width:2px;height:2px;background:#fff;"></div><div class="a" style="left:936px;top:659px;width:2px;height:2px;background:#B4A890;"></div><div class="a" style="left:941px;top:660px;width:2px;height:2px;background:#fff;"></div><div class="a" style="left:940px;top:659px;width:2px;height:2px;background:#B4A890;"></div><div class="a" style="left:945px;top:660px;width:2px;height:2px;background:#fff;"></div><div class="a" style="left:944px;top:659px;width:2px;height:2px;background:#B4A890;"></div><div class="a" style="left:0px;top:663px;width:950px;height:4px;background:linear-gradient(#0841D0,#0036B8);"></div><div class="a" style="left:948px;top:27px;width:2px;height:640px;background:#0A46D8;"></div><div class="a" style="left:0px;top:27px;width:1px;height:640px;background:#0A46D8;"></div></body></html>
